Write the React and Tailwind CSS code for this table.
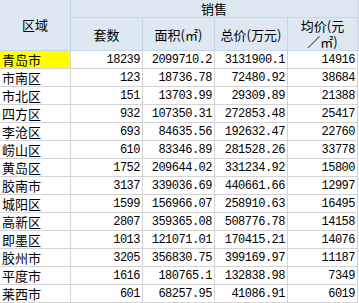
import React from "react";

const rows = [
  ["青岛市", "18239", "2099710.2", "3131900.1", "14916"],
  ["市南区", "123", "18736.78", "72480.92", "38684"],
  ["市北区", "151", "13703.99", "29309.89", "21388"],
  ["四方区", "932", "107350.31", "272853.48", "25417"],
  ["李沧区", "693", "84635.56", "192632.47", "22760"],
  ["崂山区", "610", "83346.89", "281528.26", "33778"],
  ["黄岛区", "1752", "209644.02", "331234.92", "15800"],
  ["胶南市", "3137", "339036.69", "440661.66", "12997"],
  ["城阳区", "1599", "156966.07", "258910.63", "16495"],
  ["高新区", "2807", "359365.08", "508776.78", "14158"],
  ["即墨区", "1013", "121071.01", "170415.21", "14076"],
  ["胶州市", "3205", "356830.75", "399169.97", "11187"],
  ["平度市", "1616", "180765.1", "132838.98", "7349"],
  ["莱西市", "601", "68257.95", "41086.91", "6019"],
];

const head =
  "border-r border-b border-[#c4d5e6] flex items-center justify-center text-[13px] leading-none";

export default function App() {
  return (
    <div className="w-[359px] h-[303px] bg-white overflow-hidden text-black font-['Noto_Sans_CJK_SC','Noto_Sans',sans-serif]">
      <div className="grid grid-cols-[71px_72px_72px_73px_70px] grid-rows-[18px_33px] bg-[#dde8f2]">
        <div className={`row-span-2 pb-[1px] ${head}`}>区域</div>
        <div className={`col-span-4 ${head}`}>销售</div>
        <div className={head}>套数</div>
        <div className={head}>面积(㎡)</div>
        <div className={head}>总价(万元)</div>
        <div className="border-r border-b border-[#c4d5e6] flex flex-col items-center justify-center text-[13px] leading-[16px]">
          <span>均价(元</span>
          <span>／㎡)</span>
        </div>
      </div>
      <div className="grid grid-cols-[71px_72px_72px_73px_70px] auto-rows-[18px]">
        {rows.map((r, i) => (
          <React.Fragment key={i}>
            <div
              className={
                i === 0
                  ? "border-r border-b border-[#d4d4d4] flex items-center pl-[2px] text-[13px] leading-none bg-[#ffff00]"
                  : "border-r border-b border-[#d4d4d4] flex items-center pl-[2px] text-[13px] leading-none"
              }
            >
              {r[0]}
            </div>
            {r.slice(1).map((v, j) => (
              <div
                key={j}
                className="border-r border-b border-[#d4d4d4] flex items-center justify-end pr-[2px] text-[12px] tracking-[-0.5px] leading-none font-['Liberation_Mono','DejaVu_Sans_Mono',monospace]"
              >
                {v}
              </div>
            ))}
          </React.Fragment>
        ))}
      </div>
    </div>
  );
}
